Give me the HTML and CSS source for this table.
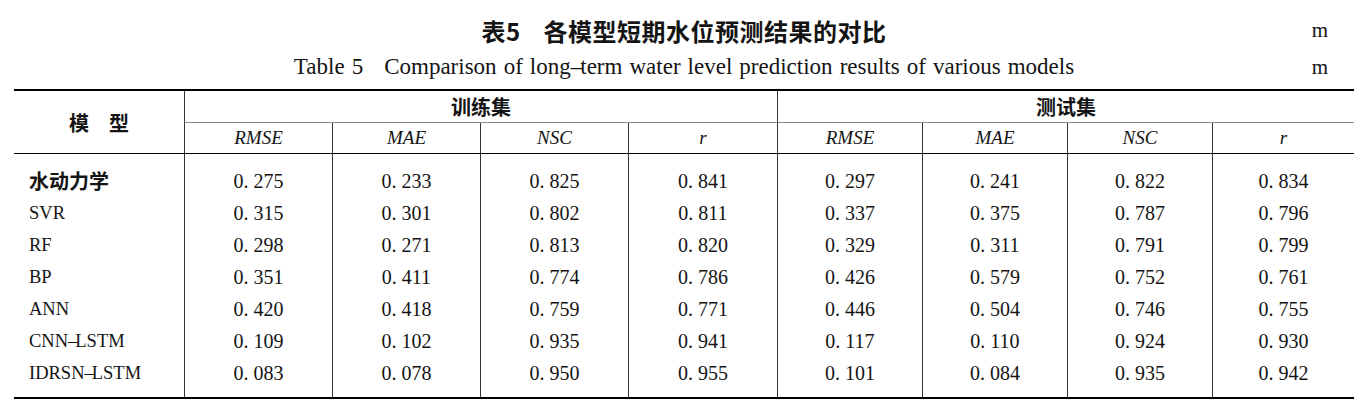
FILE: index.html
```html
<!DOCTYPE html>
<html lang="zh">
<head>
<meta charset="utf-8">
<title>表5 各模型短期水位预测结果的对比</title>
<link rel="stylesheet" href="styles.css">
</head>
<body>
<div class="page">
  <div class="cap-row cap-zh">
    <div class="cap-side"></div>
    <div class="cap-text"><span class="tno">表5</span>各模型短期水位预测结果的对比</div>
    <div class="unit">m</div>
  </div>
  <div class="cap-row cap-en">
    <div class="cap-side"></div>
    <div class="cap-text"><span class="tno">Table 5</span>Comparison of long<span class="dash">–</span>term water level prediction results of various models</div>
    <div class="unit">m</div>
  </div>
  <table class="data">
    <colgroup>
      <col class="c-model">
      <col class="c-a"><col class="c-a"><col class="c-a"><col class="c-b">
      <col class="c-c"><col class="c-c"><col class="c-c"><col class="c-d">
    </colgroup>
    <thead>
      <tr>
        <th rowspan="2" class="model-h">模　型</th>
        <th colspan="4" class="grp">训练集</th>
        <th colspan="4" class="grp">测试集</th>
      </tr>
      <tr>
        <th class="sub">RMSE</th><th class="sub">MAE</th><th class="sub">NSC</th><th class="sub">r</th>
        <th class="sub">RMSE</th><th class="sub">MAE</th><th class="sub">NSC</th><th class="sub">r</th>
      </tr>
    </thead>
    <tbody>
      <tr class="first">
        <td class="name cjk">水动力学</td>
        <td>0. 275</td><td>0. 233</td><td>0. 825</td><td>0. 841</td>
        <td>0. 297</td><td>0. 241</td><td>0. 822</td><td>0. 834</td>
      </tr>
      <tr>
        <td class="name">SVR</td>
        <td>0. 315</td><td>0. 301</td><td>0. 802</td><td>0. 811</td>
        <td>0. 337</td><td>0. 375</td><td>0. 787</td><td>0. 796</td>
      </tr>
      <tr>
        <td class="name">RF</td>
        <td>0. 298</td><td>0. 271</td><td>0. 813</td><td>0. 820</td>
        <td>0. 329</td><td>0. 311</td><td>0. 791</td><td>0. 799</td>
      </tr>
      <tr>
        <td class="name">BP</td>
        <td>0. 351</td><td>0. 411</td><td>0. 774</td><td>0. 786</td>
        <td>0. 426</td><td>0. 579</td><td>0. 752</td><td>0. 761</td>
      </tr>
      <tr>
        <td class="name">ANN</td>
        <td>0. 420</td><td>0. 418</td><td>0. 759</td><td>0. 771</td>
        <td>0. 446</td><td>0. 504</td><td>0. 746</td><td>0. 755</td>
      </tr>
      <tr>
        <td class="name">CNN<span class="dash">–</span>LSTM</td>
        <td>0. 109</td><td>0. 102</td><td>0. 935</td><td>0. 941</td>
        <td>0. 117</td><td>0. 110</td><td>0. 924</td><td>0. 930</td>
      </tr>
      <tr class="last">
        <td class="name">IDRSN<span class="dash">–</span>LSTM</td>
        <td>0. 083</td><td>0. 078</td><td>0. 950</td><td>0. 955</td>
        <td>0. 101</td><td>0. 084</td><td>0. 935</td><td>0. 942</td>
      </tr>
    </tbody>
  </table>
</div>
</body>
</html>
```

FILE: styles.css
```css
html, body {
  margin: 0;
  padding: 0;
  background: #ffffff;
  color: #141414;
}

.page {
  width: 1340px;
  margin-left: 14px;
  padding-top: 13px;
}

.cap-row {
  display: grid;
  grid-template-columns: 1fr auto 1fr;
  align-items: center;
  height: 36px;
  box-sizing: border-box;
}

.cap-zh {
  padding-bottom: 3px;
}

.cap-text {
  white-space: nowrap;
}

.unit {
  justify-self: end;
  padding-right: 26px;
  font-family: "Liberation Serif", serif;
  font-size: 21px;
}

.cap-zh .cap-text {
  font-family: "Noto Sans CJK SC", sans-serif;
  font-weight: 700;
  font-size: 24px;
  letter-spacing: 0.5px;
}

.cap-zh .tno {
  margin-right: 23px;
}

.cap-en .cap-text {
  font-family: "Liberation Serif", serif;
  font-size: 23px;
  word-spacing: 1.3px;
}

.cap-en .tno {
  margin-right: 21px;
}

.dash {
  margin-right: -2px;
}

.data {
  margin-top: 4px;
  width: 1340px;
  table-layout: fixed;
  border-spacing: 0;
  border-top: 2px solid #000;
  border-bottom: 2px solid #000;
}

.c-model { width: 170px; }
.c-a { width: 148px; }
.c-b { width: 149px; }
.c-c { width: 145px; }
.c-d { width: 142px; }

.data th,
.data td {
  padding: 0;
  text-align: center;
  vertical-align: middle;
  white-space: nowrap;
}

.model-h {
  font-family: "Noto Sans CJK SC", sans-serif;
  font-weight: 700;
  font-size: 20px;
  border-bottom: 1px solid #000;
}

.grp {
  font-family: "Noto Sans CJK SC", sans-serif;
  font-weight: 700;
  font-size: 20px;
  line-height: 31px;
  border-left: 1px solid #333;
  border-bottom: 1px solid #8a8a8a;
}

.sub {
  font-family: "Liberation Serif", serif;
  font-style: italic;
  font-weight: 400;
  font-size: 19px;
  line-height: 30px;
  border-left: 1px solid #333;
  border-bottom: 1px solid #000;
}

.data td {
  font-family: "Liberation Serif", serif;
  font-size: 20px;
  line-height: 32px;
  border-left: 1px solid #333;
}

.data td.name {
  border-left: none;
  text-align: left;
  padding-left: 15px;
  font-size: 18.5px;
}

.data td.cjk {
  font-family: "Noto Sans CJK SC", sans-serif;
  font-weight: 700;
  font-size: 20px;
}

.data tr.first td {
  padding-top: 11px;
}

.data tr.last td {
  padding-bottom: 8px;
}
```
